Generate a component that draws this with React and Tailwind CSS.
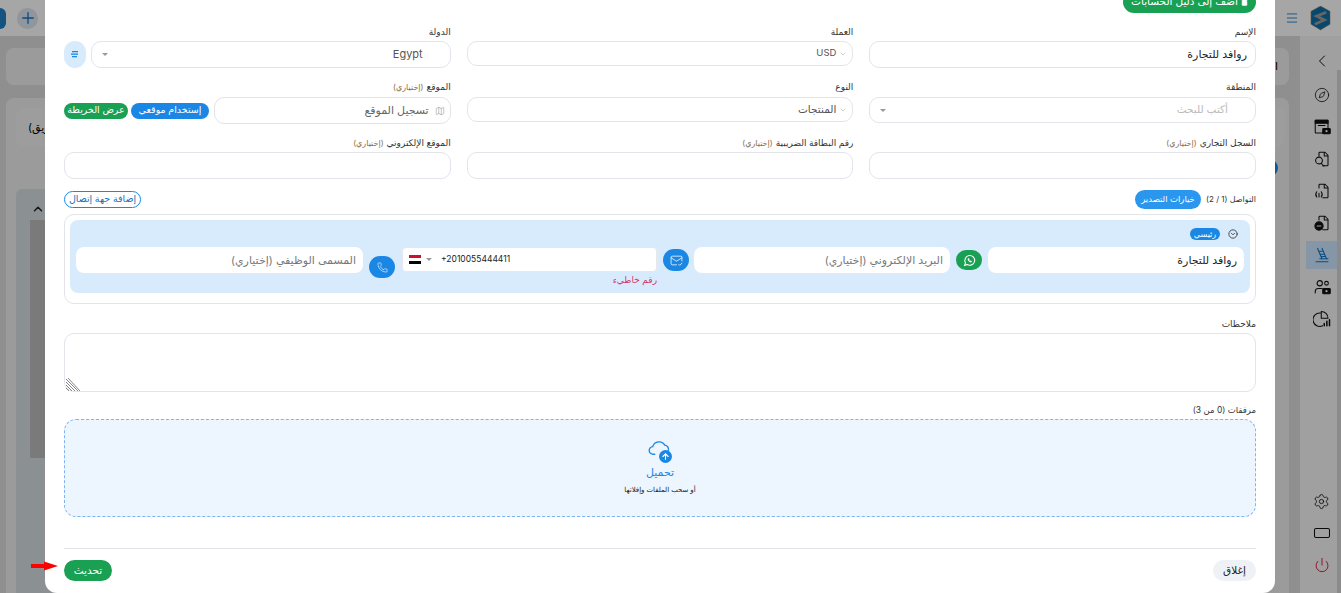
import React from 'react';
import { ChevronLeft, Compass, Settings, Power, RectangleHorizontal, Plus, Menu, ChevronDown, Map, Phone, MailCheck, ChevronUp, CircleChevronDown, BookUser, ArrowUp } from 'lucide-react';

const font = "font-['Inter','DejaVu_Sans',sans-serif]";
const inputBox = 'h-[27px] rounded-[10px] border border-[#e2e4ea] bg-white flex items-center';

function Label({ text, optional, wide }) {
  return (
    <div className={`h-[11px] flex items-center gap-[3px] text-[9px] leading-none text-[#333] ${wide ? 'mb-[5px]' : 'mb-[4px]'}`}>
      <span>{text}</span>
      {optional && <span className="text-[8px] text-[#8a6d4a]">(إختياري)</span>}
    </div>
  );
}

function Caret() {
  return <span className="w-0 h-0 border-x-[3px] border-x-transparent border-t-[3px] border-t-[#999]" />;
}

function WhatsappIcon() {
  return (
    <svg width="13" height="13" viewBox="0 0 24 24" fill="none" stroke="white" strokeWidth="2">
      <path d="M3 21l1.600-5A9 9 0 1 1 8 19.500L3 21z" />
      <path d="M9 9c0 3 3 6 6 6l1-1.500-2-1-1 .8c-1-.5-1.800-1.300-2.300-2.300l.8-1-1-2L9 9z" fill="white" strokeWidth="1" />
    </svg>
  );
}

function Logo() {
  return (
    <svg width="21" height="25" viewBox="0 0 22 26">
      <polygon points="11,0 21,5.500 21,19 11,25 1,19 1,5.500" fill="#0f6fa8" stroke="#a98a60" strokeWidth="0.500" />
      <path d="M17 6.500L7 10.500 15 14.500 5 19" fill="none" stroke="#9b9b9b" strokeWidth="3" />
    </svg>
  );
}

function Glyph({ children, color = '#111' }) {
  return (
    <svg width="18" height="18" viewBox="0 0 24 24" fill="none" stroke={color} strokeWidth="1.400" strokeLinecap="round" strokeLinejoin="round">
      {children}
    </svg>
  );
}

const filePath = 'M8 8V4a1 1 0 0 1 1-1h7l4 4v13a1 1 0 0 1-1 1h-6M15 3v5h5';

function SideIcon({ children, active, first }) {
  return (
    <div className={`h-[28px] w-[31px] shrink-0 flex items-center justify-center ${first ? 'mb-[6px]' : 'mb-[4px]'} ${active ? 'bg-[#cde7ff]' : ''}`}>
      {children}
    </div>
  );
}

function Sidebar() {
  return (
    <div className="w-[41px] shrink-0 flex bg-[#f6f6f6]">
      <div className="w-[37px] pl-[6px] pt-[11px] pb-[10px] flex flex-col">
        <SideIcon first><ChevronLeft size={20} strokeWidth={1.200} color="#111" /></SideIcon>
        <SideIcon><Compass size={16} strokeWidth={1.200} color="#111" /></SideIcon>
        <SideIcon>
          <Glyph>
            <rect x="3" y="3" width="17" height="17" rx="1" />
            <rect x="3" y="3" width="17" height="4" fill="#111" />
            <path d="M7 10h9" />
            <rect x="13" y="14" width="10" height="7" rx="1" fill="#111" />
            <circle cx="18" cy="17.500" r="1.500" fill="#f6f6f6" stroke="none" />
          </Glyph>
        </SideIcon>
        <SideIcon>
          <Glyph>
            <path d={filePath} />
            <circle cx="8" cy="14" r="4.500" />
            <path d="M11 18l3.500 3.500" />
          </Glyph>
        </SideIcon>
        <SideIcon>
          <Glyph>
            <path d={filePath} />
            <path d="M5 13c-1.500 2-1.500 5 0 7M11 13c1.500 2 1.500 5 0 7M8 15v5" />
          </Glyph>
        </SideIcon>
        <SideIcon>
          <Glyph>
            <path d={filePath} />
            <circle cx="8" cy="16" r="5.500" fill="#111" />
            <path d="M5.500 16h5" stroke="#f6f6f6" />
          </Glyph>
        </SideIcon>
        <SideIcon active>
          <Glyph color="#1277c9">
            <path d="M4 21h16M9 17h11" />
            <path d="M6 3l6 14M12 3l6 14M7.500 7h6M9 11h6M10.500 14h6" />
          </Glyph>
        </SideIcon>
        <SideIcon>
          <Glyph>
            <circle cx="9" cy="7" r="3.500" />
            <circle cx="18" cy="7" r="2.500" />
            <path d="M3 20v-2a4 4 0 0 1 4-4h5" />
            <rect x="13" y="14" width="10" height="7" rx="1" fill="#111" />
            <circle cx="18" cy="17.500" r="1.500" fill="#f6f6f6" stroke="none" />
          </Glyph>
        </SideIcon>
        <SideIcon>
          <Glyph>
            <path d="M10 4a9 9 0 1 0 3 17" />
            <path d="M11 2v9h9a9 9 0 0 0-9-9z" />
            <path d="M15 21v-3M18.500 21v-6M22 21v-8" strokeWidth="2" />
          </Glyph>
        </SideIcon>
        <div className="flex-1" />
        <SideIcon><Settings size={17} strokeWidth={1.200} color="#111" /></SideIcon>
        <SideIcon><RectangleHorizontal size={18} strokeWidth={1.400} color="#111" /></SideIcon>
        <SideIcon><Power size={16} strokeWidth={1.400} color="#d8143a" /></SideIcon>
      </div>
      <div className="w-[4px] flex flex-col">
        <div className="h-[34px] shrink-0" />
        <div className="flex-1 bg-[#d6d6d6]" />
      </div>
    </div>
  );
}

function Background() {
  return (
    <div className={`h-[593px] flex flex-col bg-[#dadfe0] ${font}`}>
      <div className="h-[36px] shrink-0 bg-white flex items-center justify-between pr-[10px]">
        <div className="flex items-center gap-[11px] -ml-[6px]">
          <span className="w-[12px] h-[21px] rounded-full bg-[#1f7fc4]" />
          <span className="w-[21px] h-[21px] rounded-full bg-[#dde6ee] flex items-center justify-center">
            <Plus size={18} strokeWidth={1.800} color="#1277c9" />
          </span>
        </div>
        <div className="flex items-center gap-[11px]">
          <Menu size={14} strokeWidth={1.500} color="#1277c9" />
          <Logo />
        </div>
      </div>
      <div className="flex-1 flex min-h-0">
        <div className="flex-1 flex flex-col pt-[12px] pl-[6px] pr-[11px] gap-[13px] bg-[#dcdcdc]">
          <div className="h-[37px] shrink-0 bg-[#eeeff0] rounded-[8px] flex items-center justify-end pr-[11px] text-[11px] text-black">ا</div>
          <div className="relative flex-1 flex flex-col bg-[#eeeff0] rounded-t-[8px] pl-[10px] pr-[4px] pt-[10px]">
            <div className="h-[38px] shrink-0 bg-[#f1f2f3] rounded-[8px] flex items-center pl-[12px] text-[11px] text-black" dir="ltr">
              (ريق
            </div>
            <span className="absolute right-[11px] top-[62px] w-[16px] h-[16px] rounded-full bg-[#1b87e5]" />
            <div className="flex-1 mt-[43px] mr-[20px] bg-[#d6dde2] rounded-t-[6px] pl-[14px]">
              <div className="h-[31px] flex items-end pb-[4px] pl-[1px]"><ChevronUp size={14} strokeWidth={2.500} color="#222" /></div>
              <div className="h-[238px] bg-[#bcbcbc]" />
            </div>
          </div>
        </div>
        <Sidebar />
      </div>
    </div>
  );
}

function ContactCard() {
  return (
    <div className="h-[90px] rounded-[10px] border border-[#e2e4ea] p-[5px]">
      <div className="h-[73px] rounded-[8px] bg-[#d8ebfc] px-[6px] pt-[7px]">
        <div className="h-[14px] flex items-center gap-[8px] pr-[6px]">
          <CircleChevronDown size={10} color="#333" />
          <span className="h-[12px] w-[30px] rounded-full bg-[#1b87e5] text-white text-[8px] leading-none flex items-center justify-center">رئيسي</span>
        </div>
        <div className="flex items-start mt-[6px]">
          <div className="w-[256px] h-[26px] ml-[6px] bg-white rounded-[8px] flex items-center px-[7px] text-[11px] text-[#222]">روافد للتجارة</div>
          <div className="w-[26px] h-[20px] ml-[6px] mt-[3px] rounded-full bg-[#1aa053] flex items-center justify-center"><WhatsappIcon /></div>
          <div className="w-[256px] h-[26px] ml-[5px] bg-white rounded-[8px] flex items-center px-[7px] text-[11px] text-[#777]">البريد الإلكتروني (إختياري)</div>
          <div className="w-[26px] h-[22px] ml-[6px] mt-[2px] rounded-full bg-[#1b87e5] flex items-center justify-center"><MailCheck size={13} strokeWidth={1.400} color="white" /></div>
          <div className="w-[255px] ml-[7px]">
            <div className="h-[25px] bg-white rounded-[4px] border border-[#e8e8ec] flex items-center px-[6px]" dir="ltr">
              <div className="flex items-center text-[8.5px] text-[#222]">
                <span className="flex flex-col w-[12px]">
                  <span className="h-[3px] bg-[#ce1126]" />
                  <span className="h-[3px] bg-white" />
                  <span className="h-[3px] bg-black" />
                </span>
                <span className="ml-[5px] flex"><Caret /></span>
                <span className="ml-[9px]">+2010055444411</span>
              </div>
            </div>
            <div className="mt-[3px] text-[9px] text-[#d6336c] leading-none">رقم خاطيء</div>
          </div>
          <div className="w-[26px] h-[22px] ml-[6px] mt-[9px] rounded-full bg-[#1b87e5] flex items-center justify-center"><Phone size={11} strokeWidth={1.300} color="white" /></div>
          <div className="flex-1 h-[26px] bg-white rounded-[8px] flex items-center px-[7px] text-[11px] text-[#777]">المسمى الوظيفي (إختياري)</div>
        </div>
      </div>
    </div>
  );
}

function Modal() {
  return (
    <div dir="rtl" className={`absolute left-[45px] top-0 w-[1230px] h-[593px] bg-white rounded-b-[12px] overflow-hidden px-[19px] ${font}`}>
      <div className="h-[22px] -mt-[9px] w-[133px] rounded-full bg-[#1aa053] text-white text-[10.5px] flex items-center justify-center gap-[3px]">
        <BookUser size={7} fill="white" />
        <span>أضف إلى دليل الحسابات</span>
      </div>

      <div className="grid grid-cols-3 gap-x-[16px] mt-[13px]">
        <div>
          <Label text="الإسم" />
          <div className={`${inputBox} px-[8px] text-[11px] text-[#222]`}>روافد للتجارة</div>
        </div>
        <div>
          <Label text="العملة" />
          <div className="h-[25px] rounded-[10px] border border-[#e2e4ea] bg-white flex items-center px-[5px] gap-[3px] text-[9.5px] text-[#555]">
            <ChevronDown size={8} color="#bbb" />
            <span>USD</span>
          </div>
        </div>
        <div className="flex gap-[5px]">
          <div className="flex-1">
            <Label text="الدولة" />
            <div className={`${inputBox} justify-between pr-[27px] pl-[10px] text-[11px] text-[#555]`}>
              <span>Egypt</span>
              <Caret />
            </div>
          </div>
          <div className="w-[22px] h-[27px] self-end rounded-full bg-[#d8ebfc] flex items-center justify-center">
            <svg width="8" height="7" viewBox="0 0 8 7" fill="#1b87e5">
              <rect x="1" y="0" width="6" height="1.300" />
              <rect x="0" y="2.500" width="7" height="1.300" />
              <rect x="1" y="5" width="5" height="1.300" />
            </svg>
          </div>
        </div>
      </div>

      <div className="grid grid-cols-3 gap-x-[16px] mt-[13px]">
        <div>
          <Label text="المنطقة" wide />
          <div className="h-[26px] rounded-[10px] border border-[#e2e4ea] bg-white flex items-center justify-between pr-[27px] pl-[10px] text-[10.5px] text-[#bbb]">
            <span>أكتب للبحث</span>
            <Caret />
          </div>
        </div>
        <div>
          <Label text="النوع" wide />
          <div className="h-[25px] rounded-[10px] border border-[#e2e4ea] bg-white flex items-center px-[5px] gap-[3px] text-[10.5px] text-[#555]">
            <ChevronDown size={8} color="#bbb" />
            <span>المنتجات</span>
          </div>
        </div>
        <div>
          <Label text="الموقع" optional wide />
          <div className="flex items-center gap-[3px]">
            <div className={`${inputBox} flex-1 ml-[2px] px-[5px] gap-[6px] text-[11px] text-[#666]`}>
              <Map size={10} strokeWidth={1.200} color="#888" />
              <span>تسجيل الموقع</span>
            </div>
            <span className="h-[16px] w-[78px] rounded-full bg-[#1b87e5] text-white text-[9.5px] flex items-center justify-center">إستخدام موقعي</span>
            <span className="h-[16px] w-[64px] rounded-full bg-[#1aa053] text-white text-[9.5px] flex items-center justify-center">عرض الخريطة</span>
          </div>
        </div>
      </div>

      <div className="grid grid-cols-3 gap-x-[16px] mt-[13px]">
        <div>
          <Label text="السجل التجاري" optional />
          <div className={inputBox} />
        </div>
        <div>
          <Label text="رقم البطاقة الضريبية" optional />
          <div className={inputBox} />
        </div>
        <div>
          <Label text="الموقع الإلكتروني" optional />
          <div className={inputBox} />
        </div>
      </div>

      <div className="flex items-center justify-between h-[20px] mt-[10px] mb-[5px]">
        <div className="flex items-center gap-[6px] text-[8px] text-[#333]">
          <span className="w-[49px] whitespace-nowrap">التواصل (1 / 2)</span>
          <span className="h-[19px] w-[66px] rounded-full bg-[#2a96ee] text-white text-[8.5px] flex items-center justify-center whitespace-nowrap">خيارات التصدير</span>
        </div>
        <span className="h-[17px] w-[77px] rounded-full border border-[#1b87e5] text-[#1b6fb5] text-[9.5px] flex items-center justify-center">إضافة جهة إتصال</span>
      </div>

      <ContactCard />

      <div className="mt-[14px]">
        <Label text="ملاحظات" />
        <div className="relative h-[59px] rounded-[10px] border border-[#e2e4ea]">
          <svg className="absolute left-[1px] bottom-0" width="14" height="14" viewBox="0 0 14 14" stroke="#666" strokeWidth="0.800">
            <path d="M0 2L12 14M0 5L9 14M0 8L6 14M0 11L3 14M2 1L14 14" />
          </svg>
        </div>
      </div>

      <div className="mt-[13px]">
        <div className="h-[11px] mb-[3px] text-[8.5px] leading-none text-[#333] flex items-center">مرفقات (0 من 3)</div>
        <div className="h-[98px] rounded-[12px] border border-dashed border-[#7db4f5] bg-[#edf5fe] flex flex-col items-center justify-center">
          <div className="relative w-[24px] h-[20px] -mt-[4px]">
            <svg className="absolute left-0 -top-[2px]" width="23" height="23" viewBox="0 0 24 24" fill="none" stroke="#1b87e5" strokeWidth="1.400" strokeLinecap="round">
              <path d="M7 17H5.500a4 4 0 0 1-.5-8A6.800 6.800 0 0 1 17.500 7.500 4.500 4.500 0 0 1 21 14" />
            </svg>
            <span className="absolute right-0 -bottom-[3px] w-[13px] h-[13px] rounded-full bg-[#1b87e5] flex items-center justify-center">
              <ArrowUp size={9} strokeWidth={3} color="white" />
            </span>
          </div>
          <div className="mt-[7px] text-[11px] leading-none text-[#1b87e5]">تحميل</div>
          <div className="mt-[8px] text-[7px] leading-none text-[#222]">أو سحب الملفات وإفلاتها</div>
        </div>
      </div>

      <div className="mt-[31px] border-t border-[#e2e4ea] pt-[11px] flex items-center justify-between">
        <span className="h-[21px] w-[43px] rounded-full bg-[#eef1f5] text-[#222] text-[10.5px] flex items-center justify-center">إغلاق</span>
        <span className="h-[21px] w-[48px] rounded-full bg-[#1aa053] text-white text-[10.5px] flex items-center justify-center">تحديث</span>
      </div>
    </div>
  );
}

export default function App() {
  return (
    <div className="relative w-[1341px] h-[593px] overflow-hidden">
      <Background />
      <div className="absolute inset-0 bg-black/35" />
      <Modal />
      <svg className="absolute left-[31px] top-[560px]" width="28" height="12" viewBox="0 0 28 12">
        <path d="M0 4H13V1.500L27 6 13 10.500V8H0z" fill="#f00" />
      </svg>
    </div>
  );
}
